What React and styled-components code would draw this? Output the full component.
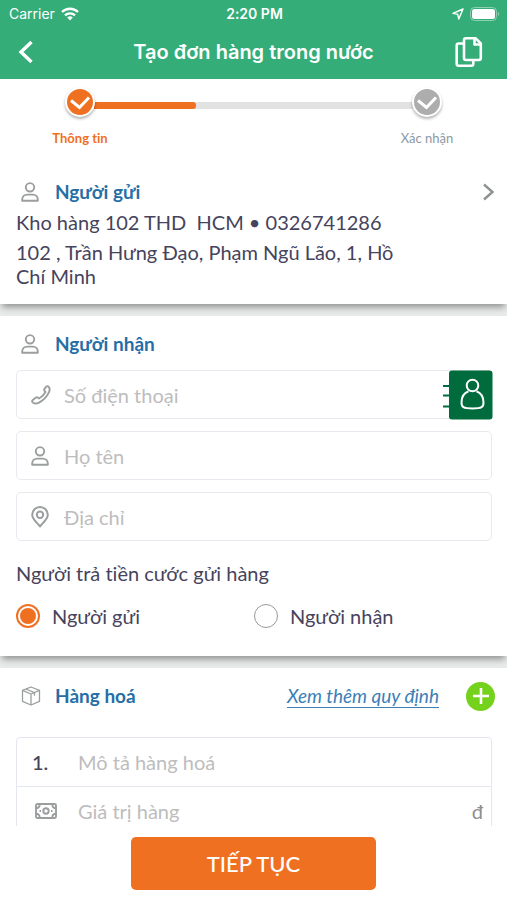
import { useState } from "react"
import styled, { createGlobalStyle } from "styled-components"


const StepCheck = () => (
    <svg width="26" height="26" viewBox="0 0 26 26" fill="none" aria-hidden="true">
        <path d="M4 11.500l8.500 7L22 8.500" stroke="#fff" strokeWidth="3" />
    </svg>
)

const PersonIcon = () => (
    <svg width="18" height="20" viewBox="0 0 18 20" fill="none" stroke="#9b9e9f" strokeWidth="1.900" aria-hidden="true">
        <circle cx="9" cy="5.300" r="4.200" />
        <path d="M1.200 18.700v-1.200c0-3 2.300-4.900 5-4.900h5.600c2.700 0 5 1.900 5 4.900v1.200z" strokeLinejoin="round" />
    </svg>
)

const PhoneIcon = () => (
    <svg width="20" height="20" viewBox="0 0 20 20" fill="none" stroke="#9b9e9f" strokeWidth="1.900" strokeLinejoin="round" aria-hidden="true">
        <path d="M1.500 15.200c-.6.900-.3 1.900.6 2.500 1.500 1 3.500 1 5.400.1 4.700-2.200 8.500-6.200 10.500-10.600.9-1.900.8-3.900-.3-5.300-.7-.9-1.800-1-2.500-.2l-1.700 2.200c-.5.700-.4 1.500.2 2.200l.8.900c-1.400 2.800-3.500 4.900-6.400 6.500l-1-.8c-.7-.6-1.500-.6-2.200-.1z" />
    </svg>
)

const PinIcon = () => (
    <svg width="18" height="22" viewBox="0 0 18 22" fill="none" stroke="#9b9e9f" strokeWidth="2" aria-hidden="true">
        <path d="M9 20.500C7.600 18 1.200 13.800 1.200 8.800a7.800 7.800 0 0 1 15.600 0C16.800 13.800 10.400 18 9 20.500z" strokeLinejoin="round" />
        <circle cx="9" cy="8.800" r="3.200" />
    </svg>
)

const BoxIcon = () => (
    <svg width="20" height="20" viewBox="0 0 20 20" fill="none" stroke="#9b9e9f" strokeWidth="1.300" strokeLinejoin="round" aria-hidden="true">
        <path d="M10 1l8.500 3.300v11L10 19l-8.500-3.700v-11z" />
        <path d="M1.500 4.300L10 8l8.500-3.700M10 8v11M4.800 3l8.700 3.600v3.200" />
    </svg>
)

const CashIcon = () => (
    <svg width="22" height="16" viewBox="0 0 22 16" fill="none" stroke="#9b9e9f" strokeWidth="1.900" aria-hidden="true">
        <rect x="1" y="1" width="20" height="14" rx="1.500" />
        <circle cx="11" cy="8" r="2.700" />
        <path d="M1 5.200c2.300 0 3.700-1.400 3.700-3.700M17.300 1.500c0 2.300 1.400 3.700 3.700 3.700M1 10.800c2.300 0 3.700 1.400 3.700 3.700M17.300 14.500c0-2.300 1.400-3.700 3.700-3.700" />
        <path d="M4.500 8H6M16 8h1.500" />
    </svg>
)

const WifiIcon = () => (
    <svg width="18" height="14" viewBox="0 0 18 14" fill="none" stroke="#fff" strokeWidth="2.300" aria-hidden="true">
        <path d="M1 5a11.500 11.500 0 0 1 16 0M4 8.300a7.200 7.200 0 0 1 10 0" />
        <path d="M9 13.500l-2.800-3a4 4 0 0 1 5.600 0z" fill="#fff" stroke="none" />
    </svg>
)

const LocationIcon = () => (
    <svg width="12" height="12" viewBox="0 0 12 12" fill="none" stroke="#fff" strokeWidth="1.400" strokeLinejoin="round" aria-hidden="true">
        <path d="M11 1L1 5.400l4.700.9L6.800 11z" />
    </svg>
)

const BatteryIcon = () => (
    <svg width="30" height="14" viewBox="0 0 30 14" aria-hidden="true">
        <rect x="0.500" y="0.500" width="26" height="13" rx="4" fill="none" stroke="#8fd0b3" />
        <rect x="2" y="2" width="23" height="10" rx="2.500" fill="#fff" />
        <path d="M28 5v4c1.600-.6 1.600-3.400 0-4z" fill="#8fd0b3" />
    </svg>
)

const CopyIcon = () => (
    <svg width="28" height="32" viewBox="0 0 28 32" fill="none" stroke="#fff" strokeWidth="2.600" strokeLinejoin="round" aria-hidden="true">
        <path d="M11 2.200h9.500l5.300 5.300V22a2 2 0 0 1-2 2H11a2 2 0 0 1-2-2V4.200a2 2 0 0 1 2-2z" />
        <path d="M19.500 2.500V8.500h6" />
        <path d="M9 7.500H3.700a2 2 0 0 0-2 2v18.300a2 2 0 0 0 2 2h12.600a2 2 0 0 0 2-2V24" />
    </svg>
)

const ContactsIcon = () => (
    <svg width="50" height="50" viewBox="0 0 50 50" fill="none" aria-hidden="true">
        <rect x="6" y="0.500" width="43.500" height="49" rx="3" fill="#006b3c" />
        <path d="M0 16h6M0 25.500h6M0 36.500h6" stroke="#006b3c" strokeWidth="2" />
        <g stroke="#fff" strokeWidth="2">
            <circle cx="29.500" cy="15.500" r="5.800" />
            <path d="M25.500 21.200c-5 2-7 6.500-7 11.200 0 4.500 1.500 6 11 6s11-1.500 11-6c0-4.700-2-9.200-7-11.200" />
        </g>
    </svg>
)

const fields = [
    { id: 'phone', placeholder: 'Số điện thoại', type: 'tel', icon: PhoneIcon, contacts: true },
    { id: 'name', placeholder: 'Họ tên', type: 'text', icon: PersonIcon },
    { id: 'address', placeholder: 'Địa chỉ', type: 'text', icon: PinIcon },
]

const payers = [
    { id: 'sender', label: 'Người gửi' },
    { id: 'receiver', label: 'Người nhận' },
]

const App = () => {

    const [payer, setPayer] = useState('sender')

    return (
        <Screen>
            <GlobalStyle />
            <Header>
                <StatusBar>
                    <StatusSide>Carrier <WifiIcon /></StatusSide>
                    <StatusTime>2:20 PM</StatusTime>
                    <StatusSide $end><LocationIcon /><BatteryIcon /></StatusSide>
                </StatusBar>
                <TitleBar>
                    <IconButton aria-label="Quay lại">
                        <svg width="16" height="24" viewBox="0 0 16 24" fill="none" aria-hidden="true">
                            <path d="M13.500 2L3 12l10.500 10" stroke="#fff" strokeWidth="3.400" />
                        </svg>
                    </IconButton>
                    <Title>Tạo đơn hàng trong nước</Title>
                    <IconButton $end aria-label="Sao chép"><CopyIcon /></IconButton>
                </TitleBar>
            </Header>

            <Content>
                <Section>
                    <Stepper>
                        <Step $active>
                            <StepDot $active><StepCheck /></StepDot>
                            Thông tin
                        </Step>
                        <StepTrack><StepProgress /></StepTrack>
                        <Step>
                            <StepDot><StepCheck /></StepDot>
                            Xác nhận
                        </Step>
                    </Stepper>
                    <SectionHead>
                        <HeadIcon><PersonIcon /></HeadIcon>
                        <SectionTitle>Người gửi</SectionTitle>
                        <IconButton $end aria-label="Chọn người gửi">
                            <svg width="12" height="18" viewBox="0 0 12 18" fill="none" aria-hidden="true">
                                <path d="M1 1.500L9.500 9 1 16.500" stroke="#8e9293" strokeWidth="2.400" />
                            </svg>
                        </IconButton>
                    </SectionHead>
                    <Sender>Kho hàng 102 THD  HCM • 0326741286</Sender>
                    <Sender>102 , Trần Hưng Đạo, Phạm Ngũ Lão, 1, Hồ Chí Minh</Sender>
                </Section>

                <Section>
                    <SectionHead>
                        <HeadIcon><PersonIcon /></HeadIcon>
                        <SectionTitle>Người nhận</SectionTitle>
                    </SectionHead>
                    <Fields>
                        {
                            fields.map(el => {
                                const Icon = el.icon
                                return (
                                    <Field key={el.id}>
                                        <FieldIcon htmlFor={el.id} aria-label={el.placeholder}><Icon /></FieldIcon>
                                        <Input id={el.id} type={el.type} placeholder={el.placeholder} />
                                        {el.contacts && <ContactsButton aria-label="Danh bạ"><ContactsIcon /></ContactsButton>}
                                    </Field>
                                )
                            })
                        }
                    </Fields>
                    <Payer>
                        <PayerTitle>Người trả tiền cước gửi hàng</PayerTitle>
                        {
                            payers.map(el => (
                                <PayerOption key={el.id}>
                                    <Radio
                                        type="radio"
                                        name="payer"
                                        checked={payer === el.id}
                                        onChange={() => setPayer(el.id)}
                                    />
                                    {el.label}
                                </PayerOption>
                            ))
                        }
                    </Payer>
                </Section>

                <Section>
                    <SectionHead>
                        <HeadIcon><BoxIcon /></HeadIcon>
                        <SectionTitle>Hàng hoá</SectionTitle>
                        <RulesLink href="#rules">Xem thêm quy định</RulesLink>
                        <AddButton aria-label="Thêm hàng hoá">
                            <svg width="16" height="16" viewBox="0 0 16 16" aria-hidden="true">
                                <path d="M8 0v16M0 8h16" stroke="#fff" strokeWidth="2.600" />
                            </svg>
                        </AddButton>
                    </SectionHead>
                    <Goods>
                        <GoodsRow>
                            <GoodsLabel htmlFor="goods">1.</GoodsLabel>
                            <Input id="goods" type="text" placeholder="Mô tả hàng hoá" />
                        </GoodsRow>
                        <GoodsRow>
                            <GoodsLabel htmlFor="price" aria-label="Giá trị hàng"><CashIcon /></GoodsLabel>
                            <Input id="price" type="text" placeholder="Giá trị hàng" />
                            <Currency>đ</Currency>
                        </GoodsRow>
                    </Goods>
                </Section>
            </Content>

            <Footer>
                <SubmitButton>TIẾP TỤC</SubmitButton>
            </Footer>
        </Screen>
    )
}

export default App;

const GlobalStyle = createGlobalStyle`
    * {
        box-sizing: border-box;
    }
    body {
        margin: 0;
        font-family: Lato, 'Noto Sans', sans-serif;
        font-size: 20px;
        line-height: 24px;
        font-variant-ligatures: none;
        color: #46435c;
        background: #fff;
    }
    button, input {
        font: inherit;
        color: inherit;
        border: none;
        background: none;
        padding: 0;
        margin: 0;
    }
    h1, h2, p {
        margin: 0;
    }
    svg {
        display: block;
        flex-shrink: 0;
    }
`

const Screen = styled.div`
    height: 100vh;
    display: flex;
    flex-direction: column;
`

const Header = styled.header`
    background: #34ad78;
    color: #fff;
    font-family: Inter, 'Noto Sans', sans-serif;
`

const StatusBar = styled.div`
    display: grid;
    grid-template-columns: 1fr auto 1fr;
    align-items: center;
    height: 27px;
    padding: 0 7px 0 9px;
    font-size: 14px;
`

const StatusSide = styled.div`
    display: flex;
    align-items: center;
    gap: 6px;
    justify-content: ${({ $end }) => $end ? 'flex-end' : 'flex-start'};
`

const StatusTime = styled.div`
    font-weight: 600;
`

const TitleBar = styled.div`
    display: grid;
    grid-template-columns: 38px 1fr 32px;
    align-items: center;
    height: 52px;
    padding: 0 24px 2px 18px;
`

const Title = styled.h1`
    font-size: 20px;
    font-weight: 600;
    text-align: center;
`

const IconButton = styled.button`
    display: flex;
    justify-content: ${({ $end }) => $end ? 'flex-end' : 'flex-start'};
    ${({ $end }) => $end && 'margin-left: auto;'}
`

const Content = styled.main`
    flex: 1;
    min-height: 0;
    overflow-y: auto;
    scrollbar-width: none;
    background: #e9ebeb;
`

const Section = styled.section`
    background: #fff;
    padding: 16px 12px 16px 16px;
    margin-bottom: 12px;
    box-shadow: 0 5px 7px -2px rgba(0, 0, 0, 0.4);
`

const Stepper = styled.div`
    display: flex;
    justify-content: space-between;
    padding: 0 36px;
    margin: -8px -12px 30px -16px;
`

const Step = styled.div`
    width: 88px;
    display: flex;
    flex-direction: column;
    align-items: center;
    gap: 9px;
    font-size: 13px;
    font-weight: ${({ $active }) => $active ? 700 : 400};
    color: ${({ $active }) => $active ? '#f07022' : '#8d98a3'};
`

const StepDot = styled.span`
    position: relative;
    border: 2px solid #fff;
    border-radius: 50%;
    background: ${({ $active }) => $active ? '#f07022' : '#adadad'};
    box-shadow: 0 2px 3px rgba(0, 0, 0, 0.3);
`

const StepTrack = styled.div`
    flex: 1;
    height: 7px;
    margin: 15px -30px 0;
    background: #e2e2e2;
`

const StepProgress = styled.div`
    width: 32%;
    height: 100%;
    border-radius: 0 3px 3px 0;
    background: #f07022;
`

const SectionHead = styled.div`
    display: flex;
    align-items: center;
    height: 24px;
    margin-bottom: 6px;
`

const HeadIcon = styled.span`
    width: 39px;
    padding-left: 5px;
`

const SectionTitle = styled.h2`
    font-size: 19px;
    font-weight: 700;
    color: #266ea6;
`

const Sender = styled.p`
    max-width: 400px;
    white-space: pre-wrap;

    & + & {
        margin-top: 6px;
    }
`

const Fields = styled.div`
    display: grid;
    gap: 12px;
    margin: 14px 0 20px;
    padding-right: 3px;
`

const Field = styled.div`
    display: flex;
    align-items: center;
    height: 49px;
    border: 1px solid #e6e9ee;
    border-radius: 5px;
`

const FieldIcon = styled.label`
    width: 47px;
    padding-left: 14px;
`

const Input = styled.input`
    flex: 1;
    min-width: 0;
    height: 100%;
    outline: none;

    &::placeholder {
        color: #bdbdbd;
        opacity: 1;
    }
`

const ContactsButton = styled.button`
    margin-right: -2px;
`

const Payer = styled.div`
    display: grid;
    grid-template-columns: 1fr 1fr;
    row-gap: 19px;
    padding: 0 3px 12px 0;
`

const PayerTitle = styled.p`
    grid-column: 1 / -1;
`

const PayerOption = styled.label`
    display: flex;
    align-items: center;
    gap: 12px;
`

const Radio = styled.input`
    appearance: none;
    width: 24px;
    height: 24px;
    border: 1px solid #999;
    border-radius: 50%;

    &:checked {
        border: 2px solid #f07022;
        background: #f07022 content-box;
        padding: 2px;
    }
`

const RulesLink = styled.a`
    margin-left: auto;
    font-size: 19px;
    font-style: italic;
    color: #3d7fb5;
    text-underline-offset: 4px;
    text-decoration-thickness: 1px;
`

const AddButton = styled.button`
    display: flex;
    align-items: center;
    justify-content: center;
    width: 29px;
    height: 29px;
    margin-left: 27px;
    border-radius: 50%;
    background: #74d21c;
`

const Goods = styled.div`
    margin: 29px 3px 0 0;
    border: 1px solid #e4e7f2;
    border-radius: 4px;
`

const GoodsRow = styled.div`
    display: flex;
    align-items: center;
    height: 48px;
    padding: 0 8px 0 15px;

    & + & {
        border-top: 1px solid #e4e7f2;
    }
`

const GoodsLabel = styled.label`
    display: flex;
    width: 46px;
    font-weight: 500;

    svg {
        margin-left: 3px;
    }
`

const Currency = styled.span`
    color: #8e8e8e;
`

const Footer = styled.footer`
    display: flex;
    justify-content: center;
    padding: 11px 16px 10px;
    background: #fff;
`

const SubmitButton = styled.button`
    width: 245px;
    height: 53px;
    border-radius: 5px;
    background: #f07022;
    color: #fff;
    font-size: 22px;
    font-weight: 500;
`
